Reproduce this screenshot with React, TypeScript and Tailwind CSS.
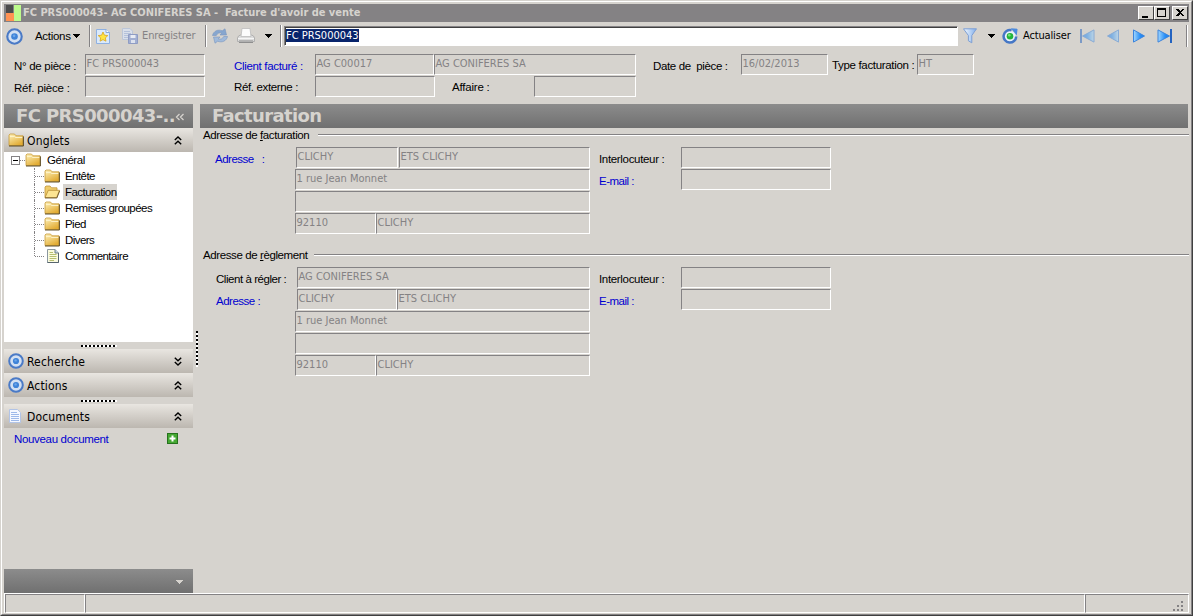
import type { ReactNode } from 'react';
import { clsx } from 'clsx';

const TREE_ITEMS: { label: string; icon: 'folder' | 'open' | 'note' }[] = [
  { label: 'Entête', icon: 'folder' },
  { label: 'Facturation', icon: 'open' },
  { label: 'Remises groupées', icon: 'folder' },
  { label: 'Pied', icon: 'folder' },
  { label: 'Divers', icon: 'folder' },
  { label: 'Commentaire', icon: 'note' },
];

/* ---------- Icons ---------- */

function TargetIcon({ className = 'w-4 h-4' }: { className?: string }) {
  return (
    <svg viewBox="0 0 16 16" className={clsx('shrink-0', className)}>
      <circle cx="8" cy="8" r="6.8" fill="#d3e0f2" stroke="#4a7ac6" strokeWidth="2" />
      <circle cx="8" cy="8" r="3.1" fill="#3f83d8" />
      <circle cx="7.6" cy="7.4" r="1.2" fill="#6ba6ea" />
    </svg>
  );
}

function FolderIcon() {
  return (
    <svg viewBox="0 0 16 14" className="w-4 h-3.5 shrink-0">
      <defs>
        <linearGradient id="folder" x1="0" y1="0" x2="0.6" y2="1">
          <stop offset="0" stopColor="#fff3bd" />
          <stop offset="1" stopColor="#e2ac34" />
        </linearGradient>
      </defs>
      <path d="M1 12.5V2L2 1H6.5L8 2.8H15V12.5Z" fill="url(#folder)" stroke="#c79a3a" strokeWidth="0.8" />
      <path d="M2 3.6H6.5L7.5 4.5H14.4" fill="none" stroke="#fff9d8" strokeWidth="0.8" />
      <path d="M1 13H15.4V3.4" fill="none" stroke="#4f4018" strokeWidth="0.9" />
    </svg>
  );
}

function OpenFolderIcon() {
  return (
    <svg viewBox="0 0 16 14" className="w-4 h-3.5 shrink-0">
      <path d="M1 12.5V2L2 1H6L7.5 2.8H13V6" fill="#f0cd6c" stroke="#c0943a" strokeWidth="0.8" />
      <path d="M1 12.5L4.3 5.3H15.6L12.6 12.5Z" fill="#fde593" stroke="#b58a34" strokeWidth="0.8" />
      <path d="M1 13H12.9L15.6 6" fill="none" stroke="#5f4b1c" strokeWidth="0.8" />
    </svg>
  );
}

function NoteIcon() {
  return (
    <svg viewBox="0 0 14 16" className="w-3.5 h-4 shrink-0">
      <path d="M1.5 1.5H9L12.5 5V14.5H1.5Z" fill="#fbfbe0" stroke="#8b98a0" />
      <path d="M9 1.5V5H12.5" fill="#c4d9e8" stroke="#6e7c86" />
      <path d="M12.5 5V14.5H1.5" fill="none" stroke="#56646e" />
      <path d="M3.5 4.5H7M3.5 6.5H10.5M3.5 8.5H10.5M3.5 10.5H10.5M3.5 12.5H8" stroke="#b7bf70" />
    </svg>
  );
}

function DocumentIcon() {
  return (
    <svg viewBox="0 0 14 16" className="w-3.5 h-4 shrink-0">
      <path d="M1.5 1.5H9.5L12.5 4.5V14.5H1.5Z" fill="#f5f8ff" stroke="#b2c4e6" />
      <path d="M3 4.5H9M3 6.5H11M3 8.5H11M3 10.5H11M3 12.5H11" stroke="#9db9ea" />
    </svg>
  );
}

function StarPageIcon() {
  return (
    <svg viewBox="0 0 14 16" className="w-3.5 h-4 shrink-0">
      <path d="M0.5 1.5H10L13.5 4.5V15.5H0.5Z" fill="#dbeafb" stroke="#8fb1e2" />
      <path d="M10 1.5V4.5H13.5" fill="#fff" stroke="#86a9dc" />
      <path
        d="M7 4L8.4 7.2L11.8 7.6L9.3 9.9L10 13.2L7 11.6L4 13.2L4.7 9.9L2.2 7.6L5.6 7.2Z"
        fill="#ffe541"
        stroke="#d9a51c"
        strokeWidth="0.8"
      />
    </svg>
  );
}

function SaveIcon() {
  return (
    <svg viewBox="0 0 16 16" className="w-4 h-4 shrink-0">
      <path d="M0.5 0.5H8L10.5 3V11.5H0.5Z" fill="#d9dfea" stroke="#bcc6d8" />
      <path d="M2 3.5H8M2 5.5H9M2 7.5H9M2 9.5H6" stroke="#b4c1da" />
      <path d="M6.5 6.5H15.5V15.5H6.5Z" fill="#a2afd2" stroke="#8f9cc4" />
      <path d="M8.5 7H13.5V10H8.5Z" fill="#e9ecf4" />
      <path d="M9 12H13V15H9Z" fill="#dde2ee" />
    </svg>
  );
}

function SyncIcon() {
  return (
    <svg viewBox="0 0 18 16" className="w-[18px] h-4 shrink-0">
      <path
        d="M1.5 7.5C2.5 3 7 1 11.3 2.8L14 0.8L15.5 7H9L10.8 5C8.5 4.3 6.3 5.2 5.3 7.5Z"
        fill="#86a6cf"
        stroke="#7896c0"
        strokeWidth="0.6"
      />
      <path
        d="M16.5 8.5C15.5 13 11 15 6.7 13.2L4 15.2L2.5 9H9L7.2 11C9.5 11.7 11.7 10.8 12.7 8.5Z"
        fill="#a0badb"
        stroke="#7896c0"
        strokeWidth="0.6"
      />
    </svg>
  );
}

function PrinterIcon() {
  return (
    <svg viewBox="0 0 18 16" className="w-[18px] h-4 shrink-0">
      <path d="M1.5 8L3.5 7H14.5L16.5 8L17.5 10V13.5H0.5V10Z" fill="#dcdcdc" stroke="#a6a6a6" strokeWidth="0.8" />
      <path d="M4 8.5L5 0.5H13L14 8.5Z" fill="#fcfcfc" stroke="#bdbdbd" strokeWidth="0.8" />
      <path d="M1 10.5H17" stroke="#f6f6f6" />
      <path d="M2 12.5H16" stroke="#b4b4b4" />
      <path d="M2 14.5H16" stroke="#8e8e8e" />
    </svg>
  );
}

function FilterIcon() {
  return (
    <svg viewBox="0 0 14 16" className="w-3.5 h-4 shrink-0">
      <defs>
        <linearGradient id="funnel" x1="0" x2="1">
          <stop offset="0" stopColor="#f4faff" />
          <stop offset="1" stopColor="#7fadeb" />
        </linearGradient>
      </defs>
      <path d="M0.5 0.8H13.5L8.8 7.5V14.8L5.4 12.8V7.5Z" fill="url(#funnel)" stroke="#7d9fd4" />
    </svg>
  );
}

function RefreshIcon() {
  return (
    <svg viewBox="0 0 16 16" className="w-4 h-4 shrink-0">
      <circle cx="8" cy="8.2" r="5.5" fill="#eaf2fb" />
      <path d="M9.5 2.2A6.3 6.3 0 1 0 14.2 8.5" fill="none" stroke="#4577c6" strokeWidth="2.5" />
      <path d="M8.8 0.3L15.6 0.8L14.8 7.4Z" fill="#4a8ade" />
      <circle cx="8" cy="8.2" r="3.3" fill="#22b53a" />
      <circle cx="7.3" cy="7.3" r="1.3" fill="#7be07e" />
    </svg>
  );
}

function NavArrow({ flip, bar, faded }: { flip?: boolean; bar?: boolean; faded?: boolean }) {
  return (
    <svg
      viewBox="0 0 16 14"
      className={clsx('w-4 h-3.5 shrink-0', flip && '-scale-x-100', faded && 'opacity-50')}
    >
      <defs>
        <linearGradient id="nav" x1="0" x2="1">
          <stop offset="0" stopColor="#a4d8ff" />
          <stop offset="0.6" stopColor="#2a90f6" />
          <stop offset="1" stopColor="#1678ee" />
        </linearGradient>
      </defs>
      <path d={bar ? 'M1 0.9L12.5 7L1 13.1Z' : 'M2.5 0.9L13.5 7L2.5 13.1Z'} fill="url(#nav)" stroke="#3c84dc" />
      {bar && <path d="M14 0V14" stroke="#2463c0" strokeWidth="2" />}
    </svg>
  );
}

function Caret({ className = 'text-black' }: { className?: string }) {
  return (
    <svg viewBox="0 0 7 4" className={clsx('w-[7px] h-1 shrink-0', className)} shapeRendering="crispEdges">
      <path d="M0 0H7L3.5 4Z" fill="currentColor" />
    </svg>
  );
}

function Chevrons({ down }: { down?: boolean }) {
  return (
    <svg viewBox="0 0 8 9" className={clsx('w-2 h-[9px] shrink-0', down && '-scale-y-100')}>
      <path d="M0.8 4L4 1L7.2 4M0.8 8.3L4 5.3L7.2 8.3" fill="none" stroke="#000" strokeWidth="1.4" />
    </svg>
  );
}

/* ---------- Small pieces ---------- */

function Label({ children, className }: { children: ReactNode; className?: string }) {
  return (
    <span className={clsx('block shrink-0 whitespace-pre text-[11.5px] leading-4', className)}>{children}</span>
  );
}

function Field({ value, className }: { value?: string; className: string }) {
  return (
    <div
      className={clsx(
        'h-[21px] shrink-0 overflow-hidden whitespace-nowrap border border-t-[#848284] border-l-[#848284] border-r-white border-b-white pl-[0.5px]',
        "font-['DejaVu_Sans_Condensed',sans-serif] text-[11px] leading-[17px] text-[#848284]",
        className,
      )}
    >
      {value}
    </div>
  );
}

function Separator() {
  return <div className="h-[22px] w-0.5 shrink-0 border-l border-r border-l-[#848284] border-r-white" />;
}

function CaptionButton({ children, className }: { children: ReactNode; className?: string }) {
  return (
    <button
      className={clsx(
        'flex h-3.5 w-4 items-center justify-center border border-t-white border-l-white border-r-[#404040] border-b-[#404040] bg-[#d6d3ce]',
        className,
      )}
    >
      <svg viewBox="0 0 14 12" className="h-3 w-3.5" shapeRendering="crispEdges">
        {children}
      </svg>
    </button>
  );
}

function PanelHeader({ icon, title, down }: { icon: ReactNode; title: string; down?: boolean }) {
  return (
    <div className="flex h-6 shrink-0 items-center bg-linear-to-b from-[#e9e6e1] to-[#bcb7b0] pr-[11px] pl-1">
      <div className="flex w-[19px]">{icon}</div>
      <span className="flex-1 pt-px font-['DejaVu_Sans_Condensed',sans-serif] text-xs leading-4 tracking-[0.15px]">
        {title}
      </span>
      <Chevrons down={down} />
    </div>
  );
}

function Grip() {
  return (
    <div className="flex h-[7px] shrink-0 items-center justify-center">
      <div className="h-0.5 w-9 bg-[repeating-linear-gradient(90deg,#000_0_2px,#fff_2px_4px)]" />
    </div>
  );
}

function GroupTitle({ children, className }: { children: ReactNode; className?: string }) {
  return (
    <div className="flex h-[19px] items-start pl-[3px]">
      <Label className={clsx('-mt-px tracking-[-0.4px]', className)}>{children}</Label>
      <div className="mt-1.5 h-0.5 flex-1 border-t border-b border-t-[#848284] border-b-white" />
    </div>
  );
}

function ContactFields() {
  return (
    <div className="ml-[9px] flex flex-col gap-px">
      <div className="flex">
        <Label className="mt-1 w-[82px] tracking-[-0.33px]">Interlocuteur :</Label>
        <Field className="w-[150px]" />
      </div>
      <div className="flex">
        <Label className="mt-1 w-[82px] tracking-[-0.5px] text-[#0000d0]">E-mail :</Label>
        <Field className="w-[150px]" />
      </div>
    </div>
  );
}

/* ---------- Sections ---------- */

function TitleBar() {
  return (
    <div className="flex h-[18px] items-center bg-[#848284] pr-px text-[#d6d3ce]">
      <svg viewBox="0 0 18 18" className="h-[18px] w-[18px]" shapeRendering="crispEdges">
        <path d="M2 1H9V9H2Z" fill="#4b4b4b" />
        <path d="M2 9H10V17H2Z" fill="#ff9252" />
        <path d="M10 1H17V17H10Z" fill="#bdfb8c" />
      </svg>
      <span className="ml-px flex-1 whitespace-pre font-['DejaVu_Sans_Condensed',sans-serif] text-[11px] font-bold leading-4 tracking-[-0.03px]">
        FC PRS000043- AG CONIFERES SA -  Facture d'avoir de vente
      </span>
      <CaptionButton>
        <path d="M3 9H9V11H3Z" />
      </CaptionButton>
      <CaptionButton>
        <path d="M2 1H11V10H2ZM3 3V9H10V3Z" fillRule="evenodd" />
      </CaptionButton>
      <CaptionButton className="ml-0.5">
        <path d="M3 2H5L7 4L9 2H11L8 5.5L11 9H9L7 7L5 9H3L6 5.5Z" />
      </CaptionButton>
    </div>
  );
}

function Toolbar() {
  return (
    <div className="flex h-7 items-center pl-0.5">
      <TargetIcon className="h-[17px] w-[17px]" />
      <Label className="ml-3 w-[38px] tracking-[-0.3px]">Actions</Label>
      <Caret />
      <div className="ml-[9px] flex">
        <Separator />
      </div>
      <div className="ml-[5px] flex w-[26px]">
        <StarPageIcon />
      </div>
      <SaveIcon />
      <span className="ml-1 w-[63px] font-['DejaVu_Sans_Condensed',sans-serif] text-[11px] tracking-[-0.1px] text-[#848284]">
        Enregistrer
      </span>
      <Separator />
      <div className="ml-1 flex w-[26px]">
        <SyncIcon />
      </div>
      <div className="flex w-7">
        <PrinterIcon />
      </div>
      <Caret />
      <div className="ml-2 flex">
        <Separator />
      </div>
      <div className="ml-0.5 flex h-5 w-[674px] border border-t-[#848284] border-l-[#848284] border-r-white border-b-white bg-white shadow-[inset_1px_1px_0_#404040]">
        <span className="mt-0.5 ml-px h-[13px] bg-[#08246b] font-['DejaVu_Sans_Condensed',sans-serif] text-[11px] leading-[13px] text-white">
          FC PRS000043
        </span>
      </div>
      <div className="ml-[5px] flex w-[25px]">
        <FilterIcon />
      </div>
      <Caret />
      <div className="ml-[7px] flex w-[21px]">
        <RefreshIcon />
      </div>
      <span className="w-[56px] font-['DejaVu_Sans_Condensed',sans-serif] text-[11px] tracking-[-0.15px]">
        Actualiser
      </span>
      <div className="flex flex-1 gap-[10px]">
        <NavArrow flip bar faded />
        <NavArrow flip faded />
        <NavArrow />
        <NavArrow bar />
      </div>
      <div className="mr-px flex">
        <Separator />
      </div>
    </div>
  );
}

function PieceHeader() {
  return (
    <div className="flex h-[54px] flex-col gap-px pt-1 pl-[10px]">
      <div className="flex">
        <Label className="mt-1 w-[71px] tracking-[-0.3px]">N° de pièce :</Label>
        <Field className="w-[120px]" value="FC PRS000043" />
        <Label className="mt-1 ml-[29px] w-[81px] tracking-[-0.33px] text-[#0000d0]">Client facturé :</Label>
        <Field className="w-[119px]" value="AG C00017" />
        <Field className="w-[202px]" value="AG CONIFERES SA" />
        <Label className="mt-1 ml-[17px] w-[88px] tracking-[-0.37px]">Date de  pièce :</Label>
        <Field className="w-[87px]" value="16/02/2013" />
        <Label className="mt-[3px] ml-1 w-[85px] tracking-[-0.33px]">Type facturation :</Label>
        <Field className="w-[57px]" value="HT" />
      </div>
      <div className="flex">
        <Label className="mt-1 w-[71px] tracking-[-0.2px]">Réf. pièce :</Label>
        <Field className="w-[120px]" />
        <Label className="mt-[3px] ml-[29px] w-[81px] tracking-[-0.36px]">Réf. externe :</Label>
        <Field className="w-[120px]" />
        <Label className="mt-[3px] ml-[17px] w-[82px] tracking-[-0.2px]">Affaire :</Label>
        <Field className="w-[102px]" />
      </div>
    </div>
  );
}

function Tree() {
  return (
    <div className="h-[190px] shrink-0 bg-white pr-1 pl-[7px]">
      <div className="flex h-4 items-center">
        <span className="flex h-[9px] w-[9px] items-center justify-center border border-[#848284]">
          <span className="h-px w-[5px] bg-black" />
        </span>
        <span className="w-[5px] border-t border-dotted border-[#848284]" />
        <FolderIcon />
        <Label className="ml-1.5 tracking-[-0.45px]">Général</Label>
      </div>
      <div className="pl-[23px]">
        {TREE_ITEMS.map((item, index) => (
          <div key={item.label} className="flex h-4 items-center">
            <span
              className={clsx(
                'self-start border-l border-dotted border-[#848284]',
                index === TREE_ITEMS.length - 1 ? 'h-2' : 'h-4',
              )}
            />
            <span className="w-[9px] border-t border-dotted border-[#848284]" />
            <span className="flex w-[19px]">
              {item.icon === 'folder' && <FolderIcon />}
              {item.icon === 'open' && <OpenFolderIcon />}
              {item.icon === 'note' && (
                <span className="ml-0.5 flex">
                  <NoteIcon />
                </span>
              )}
            </span>
            <Label className={clsx('pr-px pl-0.5 tracking-[-0.55px]', item.icon === 'open' && 'bg-[#d6d3ce]')}>
              {item.label}
            </Label>
          </div>
        ))}
      </div>
    </div>
  );
}

function Sidebar() {
  return (
    <div className="flex w-[189px] shrink-0 flex-col">
      <div className="flex h-6 shrink-0 items-center overflow-hidden bg-linear-to-b from-[#8c8c8c] to-[#707070] pr-2 pl-3 text-[#d6d3ce]">
        <span className="w-[159px] shrink-0 whitespace-nowrap font-['DejaVu_Sans',sans-serif] text-lg font-bold leading-6 tracking-[-0.6px]">
          FC PRS000043-..
        </span>
        <svg viewBox="0 0 10 9" className="mt-0.5 h-[9px] w-[10px] shrink-0">
          <path d="M4.5 1L1.5 4L4.5 7M8.5 1L5.5 4L8.5 7" fill="none" stroke="currentColor" strokeWidth="1.3" />
        </svg>
      </div>
      <PanelHeader icon={<FolderIcon />} title="Onglets" />
      <Tree />
      <Grip />
      <PanelHeader icon={<TargetIcon />} title="Recherche" down />
      <PanelHeader icon={<TargetIcon />} title="Actions" />
      <Grip />
      <PanelHeader icon={<DocumentIcon />} title="Documents" />
      <div className="flex h-[22px] items-center pr-[15px] pl-[10px]">
        <Label className="flex-1 tracking-[-0.33px] text-[#0000d0]">Nouveau document</Label>
        <svg viewBox="0 0 11 11" className="-mt-0.5 h-[11px] w-[11px]">
          <rect x="0.5" y="0.5" width="10" height="10" fill="#45a832" stroke="#26721d" />
          <path d="M5.5 2.5V8.5M2.5 5.5H8.5" stroke="#fff" strokeWidth="2" />
        </svg>
      </div>
      <div className="mt-auto flex h-6 items-center justify-end bg-linear-to-b from-[#8c8c8c] to-[#707070] pt-0.5 pr-2.5">
        <Caret className="text-[#d6d3ce]" />
      </div>
    </div>
  );
}

function Content() {
  return (
    <div className="flex flex-1 flex-col">
      <div className="mr-px h-6 bg-linear-to-b from-[#8c8c8c] to-[#707070] pl-3 font-['DejaVu_Sans',sans-serif] text-lg font-bold leading-6 tracking-[-0.65px] text-[#d6d3ce]">
        Facturation
      </div>
      <GroupTitle className="w-[115px]">
        Adresse de <u>f</u>acturation
      </GroupTitle>
      <div className="flex h-[101px] pl-[15px]">
        <Label className="mt-1 w-20 text-[#0000d0]">
          <span className="tracking-[-0.5px]">Adresse</span>
          <span className="ml-2">:</span>
        </Label>
        <div className="flex w-[295px] flex-col gap-px">
          <div className="flex gap-px pl-px">
            <Field className="w-[102px]" value="CLICHY" />
            <Field className="w-[191px]" value="ETS CLICHY" />
          </div>
          <Field className="w-[295px]" value="1 rue Jean Monnet" />
          <Field className="w-[295px]" />
          <div className="flex">
            <Field className="w-[81px]" value="92110" />
            <Field className="w-[214px]" value="CLICHY" />
          </div>
        </div>
        <ContactFields />
      </div>
      <GroupTitle className="w-[111px]">
        Adresse de <u>r</u>èglement
      </GroupTitle>
      <div className="flex pl-4">
        <div className="w-[79px]">
          <Label className="mt-1 mb-1.5 tracking-[-0.45px]">Client à régler :</Label>
          <Label className="tracking-[-0.5px] text-[#0000d0]">Adresse :</Label>
        </div>
        <div className="flex w-[295px] flex-col gap-px">
          <div className="flex pl-0.5">
            <Field className="w-[293px]" value="AG CONIFERES SA" />
          </div>
          <div className="flex pl-0.5">
            <Field className="w-[100px]" value="CLICHY" />
            <Field className="w-[193px]" value="ETS CLICHY" />
          </div>
          <Field className="w-[295px]" value="1 rue Jean Monnet" />
          <Field className="w-[295px]" />
          <div className="flex">
            <Field className="w-[81px]" value="92110" />
            <Field className="w-[214px]" value="CLICHY" />
          </div>
        </div>
        <ContactFields />
      </div>
    </div>
  );
}

function StatusBar() {
  return (
    <div className="flex h-5 border-t border-l border-white">
      <div className="w-20 border border-[#848284] border-r-white border-b-white" />
      <div className="w-[1000px] border border-[#848284] border-r-white border-b-white" />
      <div className="flex flex-1 items-end justify-end border border-[#848284] border-r-white border-b-white pr-1">
        <svg viewBox="0 0 12 12" className="h-3 w-3" shapeRendering="crispEdges">
          <path d="M9 1H11V3H9ZM5 5H7V7H5ZM9 5H11V7H9ZM1 9H3V11H1ZM5 9H7V11H5ZM9 9H11V11H9Z" fill="#848284" />
        </svg>
      </div>
    </div>
  );
}

export default function App() {
  return (
    <div className="h-[616px] w-[1193px] overflow-hidden border border-t-[#d6d3ce] border-l-[#d6d3ce] border-r-[#404040] border-b-[#404040] bg-[#d6d3ce] font-['Liberation_Sans',sans-serif] text-black">
      <div className="h-full border border-t-white border-l-white border-r-[#848284] border-b-[#848284] p-0.5 pb-0">
        <TitleBar />
        <Toolbar />
        <PieceHeader />
        <div className="flex h-[489px]">
          <Sidebar />
          <div className="flex w-[7px] shrink-0 items-center justify-center pt-px">
            <div className="h-9 w-0.5 bg-[repeating-linear-gradient(180deg,#000_0_2px,#fff_2px_4px)]" />
          </div>
          <Content />
        </div>
        <StatusBar />
      </div>
    </div>
  );
}
